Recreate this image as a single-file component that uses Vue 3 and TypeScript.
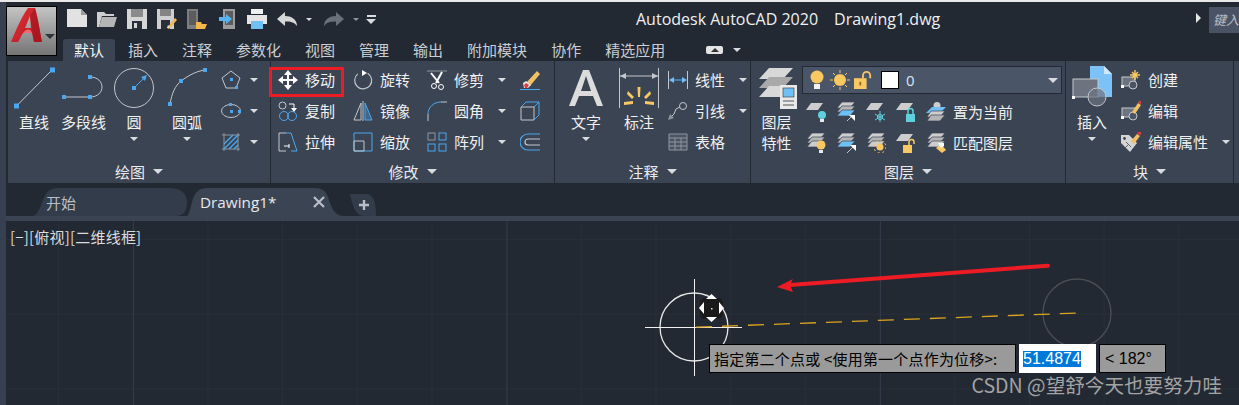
<script setup lang="ts">
interface SmallTool {
  icon: string
  label: string
  caret?: boolean
}

const ribbonTabs = ['默认', '插入', '注释', '参数化', '视图', '管理', '输出', '附加模块', '协作', '精选应用']

const qat = ['q-new', 'q-open', 'q-save', 'q-saveas', 'q-phone-open', 'q-phone-send', 'q-print']

const drawTools = [
  { icon: 'd-line', label: '直线', w: 52 },
  { icon: 'd-pline', label: '多段线', w: 47 },
  { icon: 'd-circle', label: '圆', w: 54, caret: true },
  { icon: 'd-arc', label: '圆弧', w: 52, caret: true },
]

const modifyCols: SmallTool[][] = [
  [
    { icon: 'm-move', label: '移动' },
    { icon: 'm-copy', label: '复制' },
    { icon: 'm-stretch', label: '拉伸' },
  ],
  [
    { icon: 'm-rotate', label: '旋转' },
    { icon: 'm-mirror', label: '镜像' },
    { icon: 'm-scale', label: '缩放' },
  ],
  [
    { icon: 'm-trim', label: '修剪', caret: true },
    { icon: 'm-fillet', label: '圆角', caret: true },
    { icon: 'm-array', label: '阵列', caret: true },
  ],
]

const annotateTools: SmallTool[] = [
  { icon: 'a-linear', label: '线性', caret: true },
  { icon: 'a-leader', label: '引线', caret: true },
  { icon: 'a-table', label: '表格' },
]

const blockTools: SmallTool[] = [
  { icon: 'b-create', label: '创建' },
  { icon: 'b-edit', label: '编辑' },
  { icon: 'b-attr', label: '编辑属性', caret: true },
]

const layerRows = [
  { icons: ['l-bulb', 'l-stack-blue', 'l-freeze', 'l-lock', 'l-current'], label: '置为当前' },
  { icons: ['l-stack-bulb', 'l-stack-blue2', 'l-stack-sun', 'l-unlock', 'l-match'], label: '匹配图层' },
]
</script>

<template>
  <div class="app">
    <svg class="sprite" aria-hidden="true">
      <defs>
        <linearGradient id="logo-red" x1="0" y1="0" x2="1" y2="1">
          <stop offset="0" stop-color="#e0323a" />
          <stop offset="1" stop-color="#b5171f" />
        </linearGradient>
      </defs>
      <symbol id="q-new" viewBox="0 0 20 20"><path d="M0 0H14L20 6V18H0Z" fill="#e2e2e2" /><path d="M14 0V6H20Z" fill="#9c9c9c" /></symbol>
      <symbol id="q-open" viewBox="0 0 20 20"><path d="M0 3H7L9 5H17V7H5L2 18H0Z" fill="#cfcfcf" /><path d="M5 8H20L17 18H2Z" fill="#b5b5b5" /></symbol>
      <symbol id="q-save" viewBox="0 0 20 20"><path d="M0 0H20V20H0Z" fill="#d6d6d6" /><path d="M4 0H16V8H4Z" fill="#8b8b8b" /><path d="M5 12H15V20H5Z" fill="#2a303a" /><path d="M7 14H10V19H7Z" fill="#d6d6d6" /></symbol>
      <symbol id="q-saveas" viewBox="0 0 20 20"><path d="M0 0H17V20H0Z" fill="#cfcfcf" /><path d="M3 0H14V7H3Z" fill="#858585" /><path d="M4 11H13V20H4Z" fill="#2a303a" /><path d="M10 19L18 9L20 11L12 20Z" fill="#f2b84b" /><path d="M10 19L11 16L13 18Z" fill="#e8e8e8" /></symbol>
      <symbol id="q-phone-open" viewBox="0 0 20 20"><path d="M0 0H11V20H0Z" fill="#7d7d7d" /><path d="M2 2H9V16H2Z" fill="#5c5c5c" /><path d="M9 13H14L15 15H20L18 20H9Z" fill="#f2b84b" /></symbol>
      <symbol id="q-phone-send" viewBox="0 0 16 20"><path d="M4 0H16V20H4Z" fill="#9c9c9c" /><path d="M6 2H14V16H6Z" fill="#5c5c5c" /><path d="M0 8H7V5L13 10L7 15V12H0Z" fill="#56b4f0" /></symbol>
      <symbol id="q-print" viewBox="0 0 20 20"><path d="M4 0H16V5H4Z" fill="#f0f0f0" /><path d="M0 6H20V15H16V12H4V15H0Z" fill="#e4e4e4" /><path d="M4 12H16V20H4Z" fill="#6ec0f5" /></symbol>

      <symbol id="d-line" viewBox="0 0 44 44"><path d="M4.500 40L40 4" stroke="#c3c7cc" fill="none" /><rect x="2" y="37.500" width="5" height="5" fill="#4ba7f0" /><rect x="38" y="1.500" width="5" height="5" fill="#4ba7f0" /></symbol>
      <symbol id="d-pline" viewBox="0 0 44 44"><path d="M2 31H28M28 11C44 11 44 31 28 31" stroke="#c3c7cc" fill="none" /><rect x="0" y="29" width="4" height="4" fill="#4ba7f0" /><rect x="26" y="29" width="4" height="4" fill="#4ba7f0" /><rect x="26" y="9" width="4" height="4" fill="#4ba7f0" /></symbol>
      <symbol id="d-circle" viewBox="0 0 44 44"><circle cx="22" cy="22" r="19.500" stroke="#c3c7cc" fill="none" /><path d="M22 22L33 11" stroke="#4ba7f0" /><path d="M35 9L33 15L29 11Z" fill="#4ba7f0" /><rect x="20" y="20" width="4" height="4" fill="#4ba7f0" /></symbol>
      <symbol id="d-arc" viewBox="0 0 44 44"><path d="M5 38C7 27 10 20 16 15C24 9 32 5 40 4" stroke="#c3c7cc" fill="none" /><rect x="3" y="36" width="4" height="4" fill="#4ba7f0" /><rect x="14" y="13" width="4" height="4" fill="#4ba7f0" /><rect x="38" y="2" width="4" height="4" fill="#4ba7f0" /></symbol>
      <symbol id="d-poly" viewBox="0 0 20 20"><path d="M10 1L19 8L15 18H5L1 8Z" stroke="#c3c7cc" fill="none" /><rect x="9" y="8" width="3" height="3" fill="#4ba7f0" /><rect x="14" y="16" width="3" height="3" fill="#4ba7f0" /></symbol>
      <symbol id="d-ellipse" viewBox="0 0 20 20"><ellipse cx="10" cy="10" rx="9.500" ry="6.500" stroke="#c3c7cc" fill="none" /><rect x="9" y="9" width="3" height="3" fill="#4ba7f0" /><rect x="8" y="2" width="3" height="3" fill="#4ba7f0" /><rect x="17" y="9" width="3" height="3" fill="#4ba7f0" /></symbol>
      <symbol id="d-hatch" viewBox="0 0 20 20"><path d="M1 3H19M1 17H19M3 1V19M17 1V19" stroke="#8f959c" /><path d="M3 12L12 3M3 17L17 3M8 17L17 8M13 17L17 13" stroke="#4ba7f0" stroke-width="1.400" /></symbol>

      <symbol id="m-move" viewBox="0 0 20 20"><path d="M10 2V18M2 10H18" stroke="#fff" stroke-width="2" /><path d="M10 0L14 5H6ZM10 20L14 15H6ZM0 10L5 6V14ZM20 10L15 6V14Z" fill="#fff" /></symbol>
      <symbol id="m-copy" viewBox="0 0 20 20"><rect x="1" y="1" width="7" height="7" rx="3.500" stroke="#c3c7cc" fill="none" /><circle cx="6" cy="15" r="4.500" stroke="#4ba7f0" fill="none" /><circle cx="14" cy="15" r="4.500" stroke="#4ba7f0" fill="none" /><path d="M11 3H16V8" stroke="#fff" fill="none" /><path d="M13 7H19L16 11Z" fill="#fff" /></symbol>
      <symbol id="m-stretch" viewBox="0 0 20 20"><path d="M8 1H1V19H8" stroke="#c3c7cc" fill="none" /><path d="M8 1H13L19 19H13" stroke="#4ba7f0" fill="none" /><path d="M6 14H11M11 12V16" stroke="#fff" /></symbol>
      <symbol id="m-rotate" viewBox="0 0 20 20"><path d="M12 2A8.500 8.500 0 1 1 3 6" stroke="#c3c7cc" stroke-width="1.200" fill="none" transform="rotate(20 10 10)" /><path d="M9 0L14 3L9 6Z" fill="#fff" /></symbol>
      <symbol id="m-mirror" viewBox="0 0 20 20"><path d="M8 2L1 19H8Z" stroke="#c3c7cc" fill="none" /><path d="M12 2L19 19H12Z" stroke="#4ba7f0" fill="#4ba7f0" fill-opacity=".35" /><path d="M10 0V20" stroke="#c3c7cc" /></symbol>
      <symbol id="m-scale" viewBox="0 0 20 20"><path d="M1 1H19V19H1Z" stroke="#4ba7f0" fill="none" /><path d="M1 9H11V19H1Z" stroke="#c3c7cc" fill="none" /></symbol>
      <symbol id="m-trim" viewBox="0 0 20 20"><path d="M0 1H20" stroke="#8f959c" /><path d="M4 3L12 13M15 2L9 13" stroke="#fff" stroke-width="2" /><circle cx="7" cy="16" r="2.500" stroke="#fff" fill="none" /><circle cx="14" cy="17" r="2.500" stroke="#fff" fill="none" /></symbol>
      <symbol id="m-fillet" viewBox="0 0 20 20"><path d="M1 13C1 6 7 1 14 1" stroke="#4ba7f0" fill="none" /><path d="M1 20V13M14 1H20" stroke="#c3c7cc" fill="none" /></symbol>
      <symbol id="m-array" viewBox="0 0 20 20"><rect x="1" y="1" width="7" height="7" stroke="#8f959c" fill="none" /><rect x="12" y="1" width="7" height="7" stroke="#4ba7f0" fill="none" /><rect x="1" y="12" width="7" height="7" stroke="#4ba7f0" fill="none" /><rect x="12" y="12" width="7" height="7" stroke="#4ba7f0" fill="none" /></symbol>
      <symbol id="m-erase" viewBox="0 0 20 20"><path d="M0 19.500H20" stroke="#4ba7f0" /><path d="M6 13L17 1L20 4L10 16Z" fill="#f2c063" /><path d="M3 13L6 11L11 15L8 18H4Z" fill="#e9e9e9" /><path d="M4 15L6 13L9 15L7 18H5Z" fill="#e23a40" /></symbol>
      <symbol id="m-explode" viewBox="0 0 20 20"><path d="M1 6H14V19H1Z" stroke="#c3c7cc" fill="none" /><path d="M1 6L6 1H19V14L14 19M14 6L19 1" stroke="#4ba7f0" fill="none" /></symbol>
      <symbol id="m-offset" viewBox="0 0 20 20"><path d="M20 2H8A8 8 0 0 0 8 18H20" stroke="#4ba7f0" stroke-width="1.200" fill="none" /><path d="M20 7H8A3 3 0 0 0 8 13H20" stroke="#c3c7cc" stroke-width="1.200" fill="none" /></symbol>

      <symbol id="a-text" viewBox="0 0 34 36"><path d="M0 36L14 0H20L34 36H28L24 26H10L6 36ZM12 21H22L17 6Z" fill="#dcdcdc" /></symbol>
      <symbol id="a-dim" viewBox="0 0 40 40"><path d="M0.500 0V40M39.500 0V40" stroke="#c3c7cc" /><path d="M1 8H39" stroke="#c3c7cc" /><path d="M1 8L7 5V11ZM39 8L33 5V11Z" fill="#c3c7cc" /><path d="M18.500 19H21.500L21 29H19ZM9 23L15 29L13 31L8 26ZM31 23L25 29L27 31L32 26ZM5 34L14 33V36L5 37ZM35 34L26 33V36L35 37Z" fill="#f9c863" /></symbol>
      <symbol id="a-linear" viewBox="0 0 20 20"><path d="M0.500 1V19M19.500 1V19" stroke="#c3c7cc" /><path d="M2 10H18" stroke="#4ba7f0" stroke-width="1.200" /><path d="M1 10L6 7V13ZM19 10L14 7V13Z" fill="#6ec0f5" /></symbol>
      <symbol id="a-leader" viewBox="0 0 20 20"><circle cx="15" cy="5" r="3.500" stroke="#c3c7cc" fill="none" /><path d="M12 6L8 8L6 13L2 17" stroke="#c3c7cc" fill="none" /><path d="M0 19L2 13L6 17Z" fill="#8f959c" /></symbol>
      <symbol id="a-table" viewBox="0 0 20 20"><path d="M1 2H19V18H1Z" fill="#4a5464" stroke="#8f959c" /><path d="M1 6H19M1 10H19M1 14H19M7 6V18M13 6V18" stroke="#8f959c" /></symbol>

      <symbol id="l-layers" viewBox="0 0 40 42"><path d="M12 0H36L26 11H2Z" fill="#d8d8d8" /><path d="M12 9H36L26 20H2Z" fill="#a9a9a9" /><path d="M12 18H36L26 29H2Z" fill="#d8d8d8" /><rect x="23" y="17" width="17" height="24" fill="#e9e9e9" /><rect x="26" y="20" width="11" height="9" fill="#6ec0f5" stroke="#333" stroke-width=".6" /><path d="M26 33H37M26 37H37" stroke="#555" /></symbol>
      <symbol id="l-bulb" viewBox="0 0 20 20"><path d="M5 1H17L12 8H0Z" fill="#cdcdcd" /><circle cx="16" cy="13" r="4" fill="#5fd0dc" /><path d="M14 17H18V20H14Z" fill="#e9e9e9" /></symbol>
      <symbol id="l-stack-blue" viewBox="0 0 20 20"><g stroke="#3b4453" stroke-width=".7"><path d="M6 0H19L14 6H1Z" fill="#cdcdcd" /><path d="M6 4H19L14 10H1Z" fill="#b5b5b5" /><path d="M6 8H19L14 14H1Z" fill="#6ec0f5" /></g><path d="M11 19L17 13" stroke="#c3c7cc" /><path d="M13 13H19V19Z" fill="#fff" /></symbol>
      <symbol id="l-freeze" viewBox="0 0 20 20"><path d="M5 1H17L12 8H0Z" fill="#cdcdcd" /><path d="M14 9V20M9 12L19 18M19 12L9 18" stroke="#5fd0dc" /><circle cx="14" cy="15" r="2.600" fill="none" stroke="#5fd0dc" /></symbol>
      <symbol id="l-lock" viewBox="0 0 20 20"><path d="M5 1H17L12 8H0Z" fill="#cdcdcd" /><rect x="10" y="12" width="9" height="8" fill="#5fd0dc" /><path d="M12 12V9A2.500 2.500 0 0 1 17 9V12" stroke="#5fd0dc" stroke-width="1.500" fill="none" /></symbol>
      <symbol id="l-current" viewBox="0 0 20 20"><circle cx="11" cy="3.500" r="3.500" fill="#cdcdcd" /><path d="M6 5H20L14 11H0Z" fill="#6ec0f5" /><g stroke="#3b4453" stroke-width=".7"><path d="M5 9H19L14 15H1Z" fill="#cdcdcd" /><path d="M5 13H19L14 19H1Z" fill="#b5b5b5" /></g></symbol>
      <symbol id="l-stack-bulb" viewBox="0 0 20 20"><g stroke="#3b4453" stroke-width=".7"><path d="M6 0H19L14 6H1Z" fill="#cdcdcd" /><path d="M6 4H19L14 10H1Z" fill="#b5b5b5" /><path d="M6 8H19L14 14H1Z" fill="#cdcdcd" /></g><circle cx="15" cy="12" r="4.500" fill="#f9c863" /><path d="M13 17H17V20H13Z" fill="#e9e9e9" /></symbol>
      <symbol id="l-stack-blue2" viewBox="0 0 20 20"><g stroke="#3b4453" stroke-width=".7"><path d="M6 0H19L14 6H1Z" fill="#cdcdcd" /><path d="M6 4H19L14 10H1Z" fill="#b5b5b5" /><path d="M6 8H19L14 14H1Z" fill="#6ec0f5" /></g><path d="M11 20L19 12" stroke="#c3c7cc" /><path d="M14 12H20V18Z" fill="#fff" /></symbol>
      <symbol id="l-stack-sun" viewBox="0 0 20 20"><g stroke="#3b4453" stroke-width=".7"><path d="M6 0H19L14 6H1Z" fill="#cdcdcd" /><path d="M6 4H19L14 10H1Z" fill="#b5b5b5" /><path d="M6 8H19L14 14H1Z" fill="#cdcdcd" /></g><circle cx="14" cy="14" r="3.500" fill="#f9c863" /><circle cx="14" cy="14" r="6" stroke="#f9c863" stroke-dasharray="2 2.700" fill="none" /></symbol>
      <symbol id="l-unlock" viewBox="0 0 20 20"><path d="M5 1H17L12 8H0Z" fill="#cdcdcd" /><rect x="7" y="12" width="9" height="8" fill="#f9c863" /><path d="M13 12V9A2.500 2.500 0 0 1 18 9V11" stroke="#f9c863" stroke-width="1.500" fill="none" /></symbol>
      <symbol id="l-match" viewBox="0 0 20 20"><g stroke="#3b4453" stroke-width=".7"><path d="M6 0H19L14 6H1Z" fill="#cdcdcd" /><path d="M6 4H19L14 10H1Z" fill="#b5b5b5" /><path d="M6 8H19L14 14H1Z" fill="#cdcdcd" /></g><path d="M10 15L15 11L20 17L16 20Z" fill="#f9c863" /><path d="M12 10H18V13L15 15Z" fill="#fff" /></symbol>
      <symbol id="c-bulb" viewBox="0 0 14 20"><circle cx="7" cy="7" r="6.500" fill="#f9c863" /><path d="M4 14H10V19H4Z" fill="#f1f1f1" /></symbol>
      <symbol id="c-sun" viewBox="0 0 20 20"><circle cx="10" cy="10" r="6" fill="#f9c863" /><path d="M10 0V3M10 17V20M0 10H3M17 10H20M3 3L5 5M15 15L17 17M3 17L5 15M15 5L17 3" stroke="#f9c863" /></symbol>
      <symbol id="c-lock" viewBox="0 0 20 20"><rect x="0" y="8" width="14" height="12" fill="#f9c863" /><rect x="6" y="12" width="2" height="4" fill="#8a6a26" /><path d="M10 8V5A4 4 0 0 1 18 5V8" stroke="#f9c863" stroke-width="2" fill="none" /></symbol>

      <symbol id="b-insert" viewBox="0 0 40 42"><path d="M18 0H32L40 8V31H18Z" fill="#7cc2f7" /><path d="M32 0L40 8H32Z" fill="#d0e8fb" /><rect x="1" y="13" width="25" height="18" fill="#6d7480" stroke="#c3c7cc" /><circle cx="25" cy="31" r="9" fill="#6d7480" fill-opacity=".7" stroke="#c3c7cc" /><rect x="0" y="30" width="3" height="3" fill="#fff" /></symbol>
      <symbol id="b-create" viewBox="0 0 20 20"><rect x="1" y="7" width="13" height="9" fill="#6d7480" stroke="#c3c7cc" /><circle cx="12" cy="15" r="4" fill="#4a5464" stroke="#c3c7cc" /><path d="M14 0V10M9 5H19M11 2L17 8M17 2L11 8" stroke="#f9c863" stroke-width="1.400" /><rect x="0" y="15" width="3" height="3" fill="#fff" /></symbol>
      <symbol id="b-edit" viewBox="0 0 20 20"><rect x="1" y="7" width="13" height="9" fill="#6d7480" stroke="#c3c7cc" /><circle cx="12" cy="15" r="4" fill="#4a5464" stroke="#c3c7cc" /><path d="M11 11L17 2L20 4L14 13Z" fill="#f2c063" /><path d="M17 2L18 0H20V3Z" fill="#e23a40" /><rect x="0" y="15" width="3" height="3" fill="#fff" /></symbol>
      <symbol id="b-attr" viewBox="0 0 20 20"><path d="M0 3H8L16 11L9 20L0 11Z" fill="#d4d4d4" /><circle cx="3.500" cy="6.500" r="1.400" fill="#3b4453" /><path d="M5 10L10 15M7 13L4 16" stroke="#666" /><path d="M10 9L16 2L19 4L13 12Z" fill="#f2c063" /><path d="M16 2L17 0H20V3Z" fill="#e23a40" /></symbol>
    </svg>

    <header class="top">
      <button class="app-btn" type="button">
        <svg class="logo" viewBox="0 0 31 34">
          <path d="M0 34C5 22 11 8 17 0H24C27 10 29 24 31 34H23L21 25H12C10 28 9 31 7 34ZM14 20H20L19 8Z" fill="url(#logo-red)" />
          <path d="M19 8L24 0C27 10 29 24 31 34H23Z" fill="#9c141b" fill-opacity=".55" />
          <path d="M12 25C15 21 19 20 21 25Z" fill="#ee6a6f" />
        </svg>
        <i class="caret app-caret"></i>
      </button>
      <div class="top-main">
        <div class="titlebar">
          <div class="qat">
            <svg v-for="q in qat" :key="q" class="qat-icon" :class="q"><use :href="'#' + q" /></svg>
            <svg class="undo" viewBox="0 0 20 14"><path d="M0 7L8 0V4C14 4 20 7 20 14C17 10 13 9.500 8 9.500V14Z" fill="#d6d6d6" /></svg>
            <i class="caret qat-caret"></i>
            <svg class="redo" viewBox="0 0 20 14"><path d="M20 7L12 0V4C6 4 0 7 0 14C3 10 7 9.500 12 9.500V14Z" fill="#68707c" /></svg>
            <i class="caret qat-caret dim"></i>
            <span class="qat-more"><i class="bar"></i><i class="caret"></i></span>
          </div>
          <div class="title">
            <span>Autodesk AutoCAD 2020</span>
            <span>Drawing1.dwg</span>
          </div>
          <div class="search-area">
            <i class="tri-right"></i>
            <span class="search">键入</span>
          </div>
        </div>
        <nav class="ribbon-tabs">
          <span v-for="(t, i) in ribbonTabs" :key="t" class="rtab" :class="{ active: i === 0 }">{{ t }}</span>
          <span class="pill"><i></i></span>
          <i class="caret"></i>
        </nav>
      </div>
    </header>

    <section class="ribbon">
      <div class="panel p-draw">
        <div class="panel-body">
          <div v-for="t in drawTools" :key="t.label" class="big" :style="{ width: t.w + 'px' }">
            <svg class="big-icon"><use :href="'#' + t.icon" /></svg>
            <span class="big-label">{{ t.label }}</span>
            <i v-if="t.caret" class="caret"></i>
          </div>
          <div class="mini-col">
            <div class="mini"><svg class="ico"><use href="#d-poly" /></svg><i class="caret"></i></div>
            <div class="mini"><svg class="ico"><use href="#d-ellipse" /></svg><i class="caret"></i></div>
            <div class="mini"><svg class="ico"><use href="#d-hatch" /></svg><i class="caret"></i></div>
          </div>
        </div>
        <footer class="panel-title">绘图<i class="caret"></i></footer>
      </div>

      <div class="panel p-modify">
        <div class="panel-body">
          <div v-for="(col, ci) in modifyCols" :key="ci" class="col" :class="'mcol' + ci">
            <div v-for="t in col" :key="t.label" class="small">
              <svg class="ico"><use :href="'#' + t.icon" /></svg>
              <span>{{ t.label }}</span>
              <i v-if="t.caret" class="caret"></i>
            </div>
          </div>
          <div class="col mcol3">
            <div class="small"><svg class="ico"><use href="#m-erase" /></svg></div>
            <div class="small"><svg class="ico"><use href="#m-explode" /></svg></div>
            <div class="small"><svg class="ico"><use href="#m-offset" /></svg></div>
          </div>
          <span class="highlight"></span>
        </div>
        <footer class="panel-title">修改<i class="caret"></i></footer>
      </div>

      <div class="panel p-annotate">
        <div class="panel-body">
          <div class="big text-tool">
            <svg class="big-icon a"><use href="#a-text" /></svg>
            <span class="big-label">文字</span>
            <i class="caret"></i>
          </div>
          <div class="big dim-tool">
            <svg class="big-icon"><use href="#a-dim" /></svg>
            <span class="big-label">标注</span>
          </div>
          <div class="col">
            <div v-for="t in annotateTools" :key="t.label" class="small">
              <svg class="ico"><use :href="'#' + t.icon" /></svg>
              <span>{{ t.label }}</span>
              <i v-if="t.caret" class="caret"></i>
            </div>
          </div>
        </div>
        <footer class="panel-title">注释<i class="caret"></i></footer>
      </div>

      <div class="panel p-layer">
        <div class="panel-body">
          <div class="big layer-tool">
            <svg class="big-icon"><use href="#l-layers" /></svg>
            <span class="big-label">图层<br />特性</span>
          </div>
          <div class="layer-main">
            <div class="combo">
              <svg class="c-bulb"><use href="#c-bulb" /></svg>
              <svg class="c-sun"><use href="#c-sun" /></svg>
              <svg class="c-lock"><use href="#c-lock" /></svg>
              <i class="swatch"></i>
              <span class="combo-val">0</span>
              <i class="caret"></i>
            </div>
            <div v-for="row in layerRows" :key="row.label" class="layer-row">
              <svg v-for="ic in row.icons" :key="ic" class="ico"><use :href="'#' + ic" /></svg>
              <span>{{ row.label }}</span>
            </div>
          </div>
        </div>
        <footer class="panel-title">图层<i class="caret"></i></footer>
      </div>

      <div class="panel p-block">
        <div class="panel-body">
          <div class="big insert-tool">
            <svg class="big-icon"><use href="#b-insert" /></svg>
            <span class="big-label">插入</span>
            <i class="caret"></i>
          </div>
          <div class="col">
            <div v-for="t in blockTools" :key="t.label" class="small">
              <svg class="ico"><use :href="'#' + t.icon" /></svg>
              <span>{{ t.label }}</span>
              <i v-if="t.caret" class="caret"></i>
            </div>
          </div>
        </div>
        <footer class="panel-title">块<i class="caret"></i></footer>
      </div>
    </section>

    <div class="filetabs">
      <div class="ftab start">
        <svg class="ftab-bg" viewBox="0 0 154 28" preserveAspectRatio="none"><path d="M0 28C8 26 9 6 17 2C20 0 24 0 28 0H136C146 0 154 4 154 14C154 24 150 28 142 28Z" fill="#333c4a" /></svg>
        <span>开始</span>
      </div>
      <div class="ftab current">
        <svg class="ftab-bg" viewBox="0 0 156 28" preserveAspectRatio="none"><path d="M0 28C4 26 4 8 11 3C14 0 18 0 22 0H128C135 0 139 3 141 9C144 18 147 28 156 28Z" fill="#3b4453" /></svg>
        <span>Drawing1*</span>
        <svg class="close" viewBox="0 0 12 12"><path d="M1 1L11 11M11 1L1 11" stroke="#b9bec6" stroke-width="2.200" /></svg>
      </div>
      <div class="ftab plus">
        <svg class="ftab-bg" viewBox="0 0 26 22" preserveAspectRatio="none"><path d="M0 0H16C22 0 26 5 26 22H14C5 22 2 10 0 0Z" fill="#333c4a" /></svg>
        <svg class="plus-ico" viewBox="0 0 10 10"><path d="M5 0V10M0 5H10" stroke="#b9bec6" stroke-width="2.400" /></svg>
      </div>
    </div>
    <div class="strip"></div>

    <main class="canvas">
      <svg class="drawing" viewBox="0 221 1239 184">
        <circle cx="694" cy="327" r="34" fill="none" stroke="#e8e8e8" stroke-width="1.300" />
        <path d="M645 327.500H742M694.500 279V376" stroke="#f0f0f0" />
        <circle cx="1077" cy="313" r="34" fill="none" stroke="#4a4f55" stroke-width="1.300" />
        <path d="M696 327.200L1078 313" stroke="#dca41f" stroke-width="1.300" stroke-dasharray="16 10" />
        <path d="M1048 265.700L790 285" stroke="#ed1c24" stroke-width="4" stroke-linecap="round" />
        <path d="M777 287L793 279L790 285L793 292Z" fill="#ed1c24" />
        <rect x="700" y="298" width="23" height="21" rx="5" fill="#1a1a1a" />
        <path d="M711.500 294L717 299H706ZM711.500 322L717 317H706ZM699 308L704 302V314ZM724 308L719 302V314Z" fill="#fff" />
        <rect x="711" y="308" width="1.500" height="1.500" fill="#ddd" />
      </svg>
      <span class="viewport-label">[−][俯视][二维线框]</span>
      <div class="prompt">
        <span class="prompt-text">指定第二个点或 &lt;使用第一个点作为位移&gt;:</span>
        <span class="prompt-input"><b>51.4874</b></span>
        <span class="prompt-angle">&lt; 182°</span>
      </div>
      <span class="watermark">CSDN @望舒今天也要努力哇</span>
    </main>
  </div>
</template>

<style>
html,
body {
  margin: 0;
  background: #fff;
}
</style>

<style scoped>
.app {
  position: relative;
  width: 1239px;
  height: 405px;
  overflow: hidden;
  box-sizing: border-box;
  padding: 2px 0 0 6px;
  background: linear-gradient(#e9e9e9 2px, #364050 2px);
  color: #f0f0f0;
  font-family: "Noto Sans CJK SC", "Noto Sans", sans-serif;
  font-size: 15px;
}

.sprite {
  position: absolute;
  width: 0;
  height: 0;
}

svg {
  display: block;
}

i {
  display: block;
}

.caret {
  flex: none;
  width: 0;
  height: 0;
  border-style: solid;
  border-width: 4px 4px 0;
  border-color: #d8dbdf transparent transparent;
}

/* top */
.top {
  display: flex;
  height: 59px;
  background: #222933;
}

.app-btn {
  position: relative;
  flex: none;
  width: 51px;
  height: 50px;
  margin-top: 4px;
  padding: 0;
  border: 1px solid #000;
  background: linear-gradient(#c4c4c4, #9c9c9c 50%, #757575);
}

.logo {
  position: absolute;
  left: 4px;
  top: 1px;
  width: 31px;
  height: 34px;
}

.app-caret {
  position: absolute;
  left: 38px;
  top: 27px;
  border-width: 5px 5px 0;
  border-top-color: #2f343a;
}

.top-main {
  flex: 1;
  min-width: 0;
}

.titlebar {
  display: flex;
  height: 37px;
}

.qat {
  display: flex;
  align-items: center;
  width: 570px;
  height: 34px;
  padding-left: 10px;
  box-sizing: border-box;
}

.qat-icon {
  flex: none;
  width: 20px;
  height: 20px;
  margin-right: 10px;
}

.q-phone-send {
  width: 16px;
  margin: 0 12px 0 2px;
}

.undo,
.redo {
  flex: none;
  width: 20px;
  height: 14px;
}

.qat-caret {
  margin: 0 12px 0 9px;
  border-width: 3px 3px 0;
}

.qat-caret.dim {
  margin-right: 8px;
  border-top-color: #8d939c;
}

.qat-more .bar {
  width: 9px;
  height: 2px;
  margin-bottom: 2px;
  background: #d8dbdf;
}

.qat-more .caret {
  border-width: 5px 5px 0;
  margin-left: -1px;
}

.title {
  display: flex;
  gap: 16px;
  margin-left: 9px;
  padding-top: 5px;
  font-family: "Open Sans", "Noto Sans", sans-serif;
  font-size: 16px;
  line-height: 24px;
  white-space: nowrap;
}

.search-area {
  display: flex;
  align-items: flex-start;
  margin-left: auto;
}

.tri-right {
  width: 0;
  height: 0;
  margin: 11px 8px 0 0;
  border-style: solid;
  border-width: 5px 0 5px 5px;
  border-color: transparent transparent transparent #e6e6e6;
}

.search {
  width: 30px;
  height: 26px;
  margin-top: 5px;
  padding-left: 4px;
  box-sizing: border-box;
  background: #4a5364;
  color: #b9bec6;
  font-size: 13px;
  font-style: italic;
  line-height: 25px;
  white-space: nowrap;
  overflow: hidden;
}

.ribbon-tabs {
  display: flex;
  align-items: center;
  height: 22px;
  padding-left: 6px;
  gap: 24px;
  color: #c9ced5;
  line-height: 22px;
}

.rtab {
  position: relative;
  white-space: nowrap;
}

.rtab.active {
  margin-right: -11px;
  padding: 0 11px;
  border-radius: 3px 3px 0 0;
  background: #3b4453;
  color: #f4f6f8;
}

.pill {
  display: flex;
  align-items: center;
  justify-content: center;
  width: 17px;
  height: 8px;
  margin-left: 17px;
  border-radius: 2px;
  background: #e4e4e4;
}

.pill i {
  width: 0;
  height: 0;
  border-style: solid;
  border-width: 0 4px 4px;
  border-color: transparent transparent #333;
}

.ribbon-tabs > .caret {
  margin-left: -14px;
}

/* ribbon */
.ribbon {
  display: flex;
  height: 122px;
  padding-left: 2px;
  background: linear-gradient(90deg, #222933 2px, #3b4453 2px);
}

.panel {
  display: flex;
  flex-direction: column;
  flex: none;
  box-sizing: border-box;
  border-right: 1px solid #222933;
  background: #3b4453;
}

.p-draw { width: 263px; }
.p-modify { width: 284px; }
.p-annotate { width: 196px; }
.p-layer { width: 315px; }
.p-block { width: 168px; }

.panel-body {
  position: relative;
  display: flex;
  flex: 1;
  min-height: 0;
  line-height: 18px;
}

.panel-title {
  display: flex;
  align-items: center;
  justify-content: center;
  gap: 8px;
  height: 26px;
  padding-top: 3px;
  box-sizing: border-box;
  color: #e9ebee;
  font-size: 15px;
}

.panel-title .caret {
  border-width: 5px 5px 0;
}

/* big tools */
.big {
  display: flex;
  flex: none;
  flex-direction: column;
  align-items: center;
  padding-top: 5px;
  box-sizing: border-box;
}

.big-icon {
  width: 44px;
  height: 44px;
}

.big-label {
  margin-top: 1px;
  font-size: 15px;
  text-align: center;
  line-height: 21px;
  white-space: nowrap;
}

.big .caret {
  margin-top: 5px;
}

.mini-col {
  display: flex;
  flex-direction: column;
  padding: 4px 0 0 8px;
}

.mini {
  display: flex;
  align-items: center;
  gap: 9px;
  height: 31px;
}

.ico {
  flex: none;
  width: 20px;
  height: 20px;
}

/* small tools */
.col {
  display: flex;
  flex-direction: column;
  flex: none;
  padding-top: 4px;
}

.small {
  display: flex;
  align-items: center;
  gap: 7px;
  height: 31px;
  font-size: 15px;
  white-space: nowrap;
}

.small .caret {
  margin-left: 7px;
}

.mcol0 { margin-left: 7px; width: 75px; }
.mcol1 { width: 74px; }
.mcol2 { width: 93px; }

.highlight {
  position: absolute;
  left: -2px;
  top: 6px;
  width: 75px;
  height: 30px;
  box-sizing: border-box;
  border: 3px solid #ed1c24;
}

.text-tool {
  width: 62px;
}

.text-tool .a {
  width: 34px;
  height: 36px;
  margin-top: 4px;
}

.text-tool .big-label {
  margin-top: 5px;
}

.dim-tool {
  width: 44px;
}

.dim-tool .big-icon {
  width: 40px;
  height: 40px;
  margin: 2px 0;
}

.p-annotate .col {
  margin-left: 7px;
}

.layer-tool {
  width: 51px;
}

.layer-tool .big-icon {
  width: 40px;
  height: 42px;
  margin: 2px 0 0;
}

.layer-tool .big-label {
  margin-top: 1px;
}

.layer-main {
  flex: none;
  width: 260px;
  padding-top: 5px;
}

.combo {
  display: flex;
  align-items: center;
  height: 28px;
  margin-bottom: 2px;
  box-sizing: border-box;
  padding-left: 7px;
  border: 1px solid #222933;
  background: #4a5568;
}

.c-bulb {
  width: 14px;
  height: 20px;
}

.c-sun {
  width: 20px;
  height: 20px;
  margin-left: 6px;
}

.c-lock {
  width: 18px;
  height: 20px;
  margin-left: 4px;
}

.swatch {
  width: 16px;
  height: 16px;
  margin-left: 9px;
  border: 1px solid #000;
  background: #fff;
}

.combo-val {
  margin-left: 7px;
  color: #d8e6f5;
  font-family: "Open Sans", sans-serif;
}

.combo .caret {
  margin-left: auto;
  margin-right: 3px;
  border-width: 5px 5px 0;
}

.layer-row {
  display: flex;
  align-items: center;
  gap: 10px;
  height: 31px;
  padding-left: 4px;
  font-size: 15px;
}

.layer-row span {
  margin-left: -3px;
  white-space: nowrap;
}

.insert-tool {
  width: 52px;
}

.insert-tool .big-icon {
  width: 40px;
  height: 42px;
  margin-bottom: 2px;
}

.p-block .col {
  margin-left: 3px;
}

/* file tabs */
.filetabs {
  display: flex;
  align-items: flex-end;
  height: 33px;
  padding-left: 27px;
  background: #222933;
}

.ftab {
  position: relative;
  display: flex;
  align-items: center;
  box-sizing: border-box;
  height: 28px;
  color: #b9bec6;
  font-size: 15px;
}

.ftab-bg {
  position: absolute;
  inset: 0;
  width: 100%;
  height: 100%;
}

.ftab span,
.ftab .close,
.plus-ico {
  position: relative;
}

.start {
  width: 154px;
  padding-left: 13px;
}

.current {
  width: 156px;
  padding-left: 13px;
  color: #e6e9ed;
  font-family: "Open Sans", "Noto Sans", sans-serif;
  font-size: 15.300px;
}

.close {
  width: 12px;
  height: 12px;
  margin-left: 37px;
}

.plus {
  width: 26px;
  height: 22px;
  margin-left: 7px;
  padding-left: 9px;
}

.plus-ico {
  width: 10px;
  height: 10px;
}

.strip {
  height: 5px;
  background: #3b4453;
}

/* canvas */
.canvas {
  position: relative;
  height: 184px;
  background-color: #222932;
  background-image:
    linear-gradient(90deg, #323a49 1px, transparent 1px),
    linear-gradient(90deg, #282f3a 1px, transparent 1px),
    linear-gradient(#282f3a 1px, transparent 1px);
  background-size: 373.500px 100%, 74.700px 100%, 100% 74.700px;
  background-position: 127px 0, 52px 0, 0 18px;
}

.drawing {
  position: absolute;
  left: -6px;
  top: 0;
  width: 1239px;
  height: 184px;
}

.viewport-label {
  position: absolute;
  left: 4px;
  top: 6px;
  color: #dcdcdc;
  font-size: 15px;
  letter-spacing: 0.200px;
  line-height: 20px;
}

.prompt {
  position: absolute;
  left: 703px;
  top: 123px;
  display: flex;
  gap: 3px;
  height: 29px;
  color: #000;
  line-height: 27px;
}

.prompt > span {
  box-sizing: border-box;
  border: 1px solid #000;
  background: #9a9a9a;
  white-space: nowrap;
}

.prompt-text {
  width: 307px;
  padding-left: 4px;
  font-size: 15px;
  letter-spacing: 0.200px;
}

.prompt > .prompt-input {
  width: 77px;
  padding-left: 3px;
  border-color: #fff;
  background: #fff;
  font-family: "Liberation Sans", sans-serif;
  font-size: 16px;
}

.prompt-input b {
  display: inline-block;
  height: 16px;
  background: #0078d7;
  color: #fff;
  font-weight: 400;
  line-height: 16px;
}

.prompt-angle {
  width: 67px;
  padding-left: 5px;
  font-family: "Liberation Sans", sans-serif;
  font-size: 16px;
}

.watermark {
  position: absolute;
  right: 17px;
  top: 152px;
  color: #a3a3a3;
  font-size: 19.600px;
  line-height: 24px;
  white-space: nowrap;
}
</style>
